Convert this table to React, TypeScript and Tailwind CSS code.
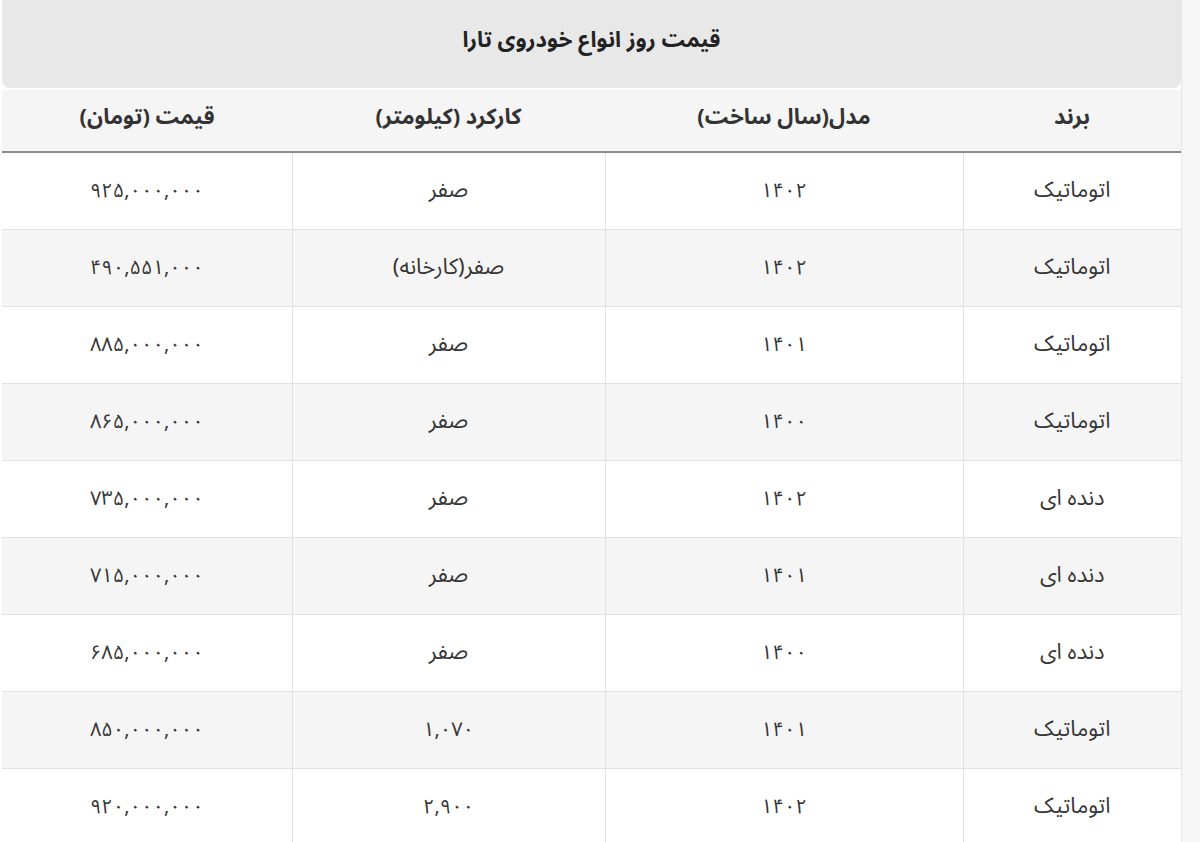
const ROWS = [
  { brand: 'اتوماتیک', model: '۱۴۰۲', km: 'صفر', price: '۹۲۵,۰۰۰,۰۰۰' },
  { brand: 'اتوماتیک', model: '۱۴۰۲', km: 'صفر(کارخانه)', price: '۴۹۰,۵۵۱,۰۰۰' },
  { brand: 'اتوماتیک', model: '۱۴۰۱', km: 'صفر', price: '۸۸۵,۰۰۰,۰۰۰' },
  { brand: 'اتوماتیک', model: '۱۴۰۰', km: 'صفر', price: '۸۶۵,۰۰۰,۰۰۰' },
  { brand: 'دنده ای', model: '۱۴۰۲', km: 'صفر', price: '۷۳۵,۰۰۰,۰۰۰' },
  { brand: 'دنده ای', model: '۱۴۰۱', km: 'صفر', price: '۷۱۵,۰۰۰,۰۰۰' },
  { brand: 'دنده ای', model: '۱۴۰۰', km: 'صفر', price: '۶۸۵,۰۰۰,۰۰۰' },
  { brand: 'اتوماتیک', model: '۱۴۰۱', km: '۱,۰۷۰', price: '۸۵۰,۰۰۰,۰۰۰' },
  { brand: 'اتوماتیک', model: '۱۴۰۲', km: '۲,۹۰۰', price: '۹۲۰,۰۰۰,۰۰۰' },
];

// digits-only cells read smaller in the reference than the word cells
const isNum = (s: string) => /^[۰-۹,]+$/.test(s);

export default function App() {
  return (
    <div className="w-[1200px] h-[842px] overflow-hidden bg-white flex font-['Noto_Sans_Arabic','DejaVu_Sans',sans-serif] text-[#363636]">
      <div className="w-[1181px] flex flex-col pl-[2px]" dir="rtl">
        {/* title */}
        <div className="h-[88px] shrink-0 bg-[#e8e8e8] rounded-b-lg flex items-center justify-center pb-[8px]">
          <h1 className="text-[22px] font-bold text-[#222]">قیمت روز انواع خودروی تارا</h1>
        </div>

        <table className="w-full mt-[2px] border-collapse table-fixed text-[22px]">
          <colgroup>
            <col className="w-[218px]" />
            <col className="w-[358px]" />
            <col className="w-[313px]" />
            <col className="w-[290px]" />
          </colgroup>
          <thead>
            <tr className="h-[62px] bg-[#f5f5f5] border-b-2 border-[#8c8c8c]">
              <th className="font-bold text-[#333] pb-[6px]">برند</th>
              <th className="font-bold text-[#333] pb-[6px]">مدل(سال ساخت)</th>
              <th className="font-bold text-[#333] pb-[6px]">کارکرد (کیلومتر)</th>
              <th className="font-bold text-[#333] pb-[6px]">قیمت (تومان)</th>
            </tr>
          </thead>
          <tbody>
            {ROWS.map((r, i) => (
              <tr key={i} className={`h-[77px] border-b border-[#e2e2e2] ${i % 2 === 1 ? 'bg-[#f5f5f5]' : 'bg-white'}`}>
                {[r.brand, r.model, r.km, r.price].map((v, j) => (
                  <td
                    key={j}
                    className={`text-center ${j < 3 ? 'border-l border-[#e2e2e2]' : ''} ${isNum(v) ? 'text-[20px]' : 'text-[22px]'}`}
                  >
                    {v}
                  </td>
                ))}
              </tr>
            ))}
          </tbody>
        </table>
      </div>
      <div className="flex-1 bg-[#f6f6f6] border-l border-[#e6e6e6]" />
    </div>
  );
}
